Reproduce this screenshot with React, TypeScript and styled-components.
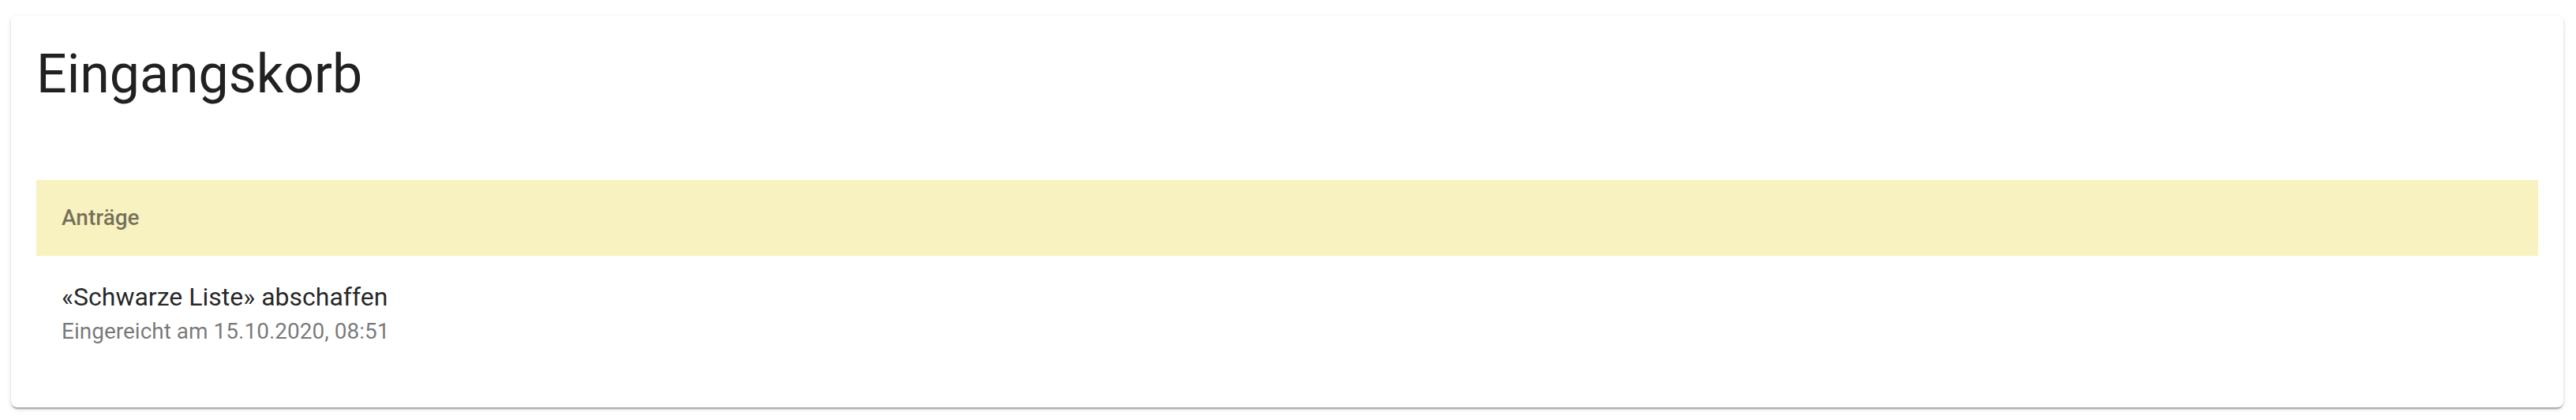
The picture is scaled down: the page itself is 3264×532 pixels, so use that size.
import styled, { createGlobalStyle } from 'styled-components';

const GlobalStyle = createGlobalStyle`
  html, body {
    margin: 0;
    padding: 0;
    background: #fff;
    font-family: Roboto, "Liberation Sans", sans-serif;
  }
`;

const Page = styled.div`
  padding: 20px 16px 16px 14px;
`;

const Card = styled.section`
  background: #fff;
  border-radius: 8px;
  padding: 32px;
  box-shadow: 0px 4px 2px -2px rgba(0, 0, 0, 0.2), 0px 2px 2px 0px rgba(0, 0, 0, 0.14),
    0px 2px 6px 0px rgba(0, 0, 0, 0.12);
`;

const Title = styled.h1`
  margin: 0 0 76px;
  font-size: 68px;
  font-weight: 400;
  line-height: 84px;
  color: rgba(0, 0, 0, 0.87);
`;

const List = styled.ul`
  list-style: none;
  margin: 0;
  padding: 16px 0;
`;

const Subheader = styled.li`
  background: #f8f1c0;
  padding: 0 32px;
  line-height: 96px;
  font-size: 28px;
  font-weight: 500;
  color: rgba(0, 0, 0, 0.54);
`;

const Item = styled.li`
  padding: 16px 32px;
`;

const ItemText = styled.div`
  margin: 12px 0;
`;

const Primary = styled.div`
  font-size: 32px;
  line-height: 48px;
  color: rgba(0, 0, 0, 0.87);
`;

const Secondary = styled.div`
  font-size: 28px;
  line-height: 40px;
  color: rgba(0, 0, 0, 0.54);
`;

const items = [
  { title: '«Schwarze Liste» abschaffen', submitted: 'Eingereicht am 15.10.2020, 08:51' },
];

const App = () => {
  return (
    <Page>
      <GlobalStyle />
      <Card>
        <Title>Eingangskorb</Title>
        <List>
          <Subheader>Anträge</Subheader>
          {items.map((item) => (
            <Item key={item.title}>
              <ItemText>
                <Primary>{item.title}</Primary>
                <Secondary>{item.submitted}</Secondary>
              </ItemText>
            </Item>
          ))}
        </List>
      </Card>
    </Page>
  );
};

export default App;
